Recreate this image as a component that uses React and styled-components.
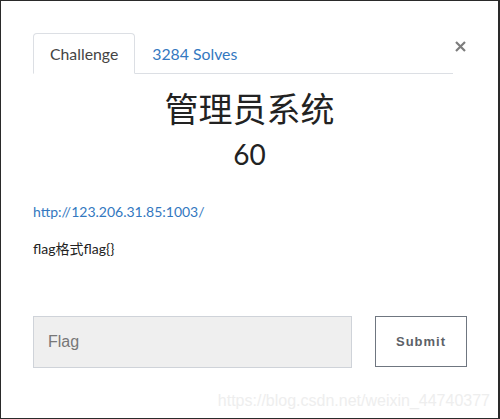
import React from 'react';
import styled, { createGlobalStyle } from 'styled-components';

const blue = '#3378c0';
const ink = '#222';
const line = '#dcdfe4';

const GlobalStyle = createGlobalStyle`
    html, body {
        margin: 0;
        padding: 0;
        background: #2a2a2a;
    }
    * {
        box-sizing: border-box;
    }
`

const Modal = styled.div`
    position: relative;
    width: 497px;
    height: 417px;
    margin: 1px 2px 1px 1px;
    padding: 32px 32px 0 32px;
    background: #fff;
    font-family: Lato, "Noto Sans CJK SC", sans-serif;
    color: ${ink};
    overflow: hidden;
`

const Header = styled.div`
    display: flex;
    align-items: flex-start;
`

const TabBar = styled.div`
    flex: 1;
    display: flex;
    border-bottom: 1px solid ${line};
`

const Tab = styled.div`
    height: 41px;
    line-height: 40px;
    padding: 0 16px;
    margin-bottom: -1px;
    font-size: 15.8px;
    border: 1px solid ${p => (p.$active ? line : 'transparent')};
    border-bottom: 1px solid ${p => (p.$active ? '#fff' : 'transparent')};
    border-radius: 4px 4px 0 0;
    color: ${p => (p.$active ? '#444' : blue)};
    background: ${p => (p.$active ? '#fff' : 'transparent')};
`

const Close = styled.button`
    border: 0;
    padding: 0;
    margin: 8px 0 0 2px;
    background: none;
    width: 11px;
    height: 11px;
    display: flex;
    cursor: pointer;
`

const Title = styled.h1`
    margin: 15px 0 0;
    text-align: center;
    font-size: 34px;
    line-height: 40px;
    font-weight: 400;
    color: ${ink};
`

const Value = styled.h2`
    margin: 8px 0 0;
    text-align: center;
    font-size: 28px;
    line-height: 34px;
    font-weight: 400;
    color: ${ink};
`

const Link = styled.a`
    display: block;
    margin-top: 31px;
    font-size: 14px;
    line-height: 20px;
    color: ${blue};
    text-decoration: none;
`

const Text = styled.p`
    margin: 17px 0 0;
    font-size: 14px;
    line-height: 20px;
    color: ${ink};
`

const Form = styled.form`
    display: flex;
    align-items: flex-start;
    gap: 23px;
    margin-top: 57px;
`

const Input = styled.input`
    flex: 0 0 319px;
    height: 52px;
    padding: 0 14px;
    border: 1px solid #cfd3d9;
    border-radius: 0;
    background: #efefef;
    font-family: "Liberation Sans", Arial, sans-serif;
    font-size: 16px;
    color: #555;
    outline: none;
    &::placeholder {
        color: #777;
    }
`

const Submit = styled.button`
    flex: 0 0 92px;
    height: 51px;
    border: 1px solid #6f7680;
    background: #fff;
    font-family: "Liberation Sans", Arial, sans-serif;
    font-size: 13px;
    font-weight: 700;
    letter-spacing: 1px;
    color: #5c6167;
    cursor: pointer;
`

const Watermark = styled.div`
    position: absolute;
    right: 8px;
    bottom: 8px;
    font-family: "Liberation Sans", Arial, sans-serif;
    font-size: 16px;
    color: #eeeeee;
    pointer-events: none;
`

const App = () => {
    return (
        <>
            <GlobalStyle />
            <Modal>
                <Header>
                    <TabBar>
                        <Tab $active>Challenge</Tab>
                        <Tab>3284 Solves</Tab>
                    </TabBar>
                    <Close aria-label="close">
                        <svg width="11" height="11" viewBox="0 0 11 11">
                            <path d="M1 1L10 10M10 1L1 10" stroke="#7d7d7d" strokeWidth="2.2" />
                        </svg>
                    </Close>
                </Header>
                <Title>管理员系统</Title>
                <Value>60</Value>
                <Link href="#">http://123.206.31.85:1003/</Link>
                <Text>flag格式flag{'{}'}</Text>
                <Form onSubmit={e => e.preventDefault()}>
                    <Input placeholder="Flag" />
                    <Submit type="submit">Submit</Submit>
                </Form>
                <Watermark>https://blog.csdn.net/weixin_44740377</Watermark>
            </Modal>
        </>
    )
}

export default App
